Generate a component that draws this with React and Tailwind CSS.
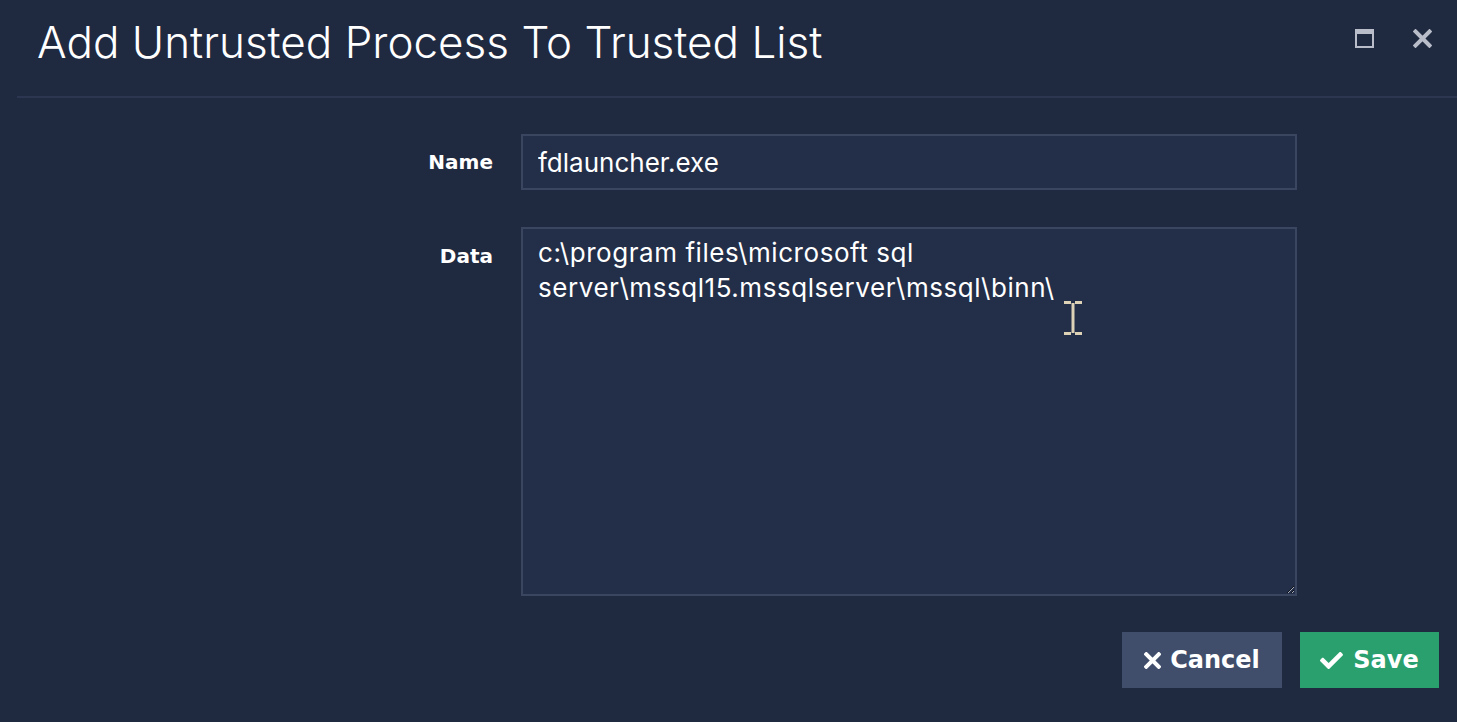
import { FaCheck } from 'react-icons/fa'

const body = { fontFamily: 'Inter, "Open Sans", sans-serif' }
const bold = { fontFamily: '"DejaVu Sans", "Open Sans", sans-serif' }

function MaximizeIcon() {
  return (
    <svg width="19" height="19" viewBox="0 0 19 19" className="text-[#b9bdc9]">
      <rect x="1" y="1" width="17" height="17" fill="none" stroke="currentColor" strokeWidth="2" />
      <rect x="1" y="1" width="17" height="4" fill="currentColor" />
    </svg>
  )
}

function CloseIcon({ size = 19, stroke = 4, className = '' }) {
  return (
    <svg width={size} height={size} viewBox="0 0 19 19" className={className}>
      <path d="M2.5 2.5l14 14M16.5 2.5l-14 14" stroke="currentColor" strokeWidth={stroke} strokeLinecap="square" />
    </svg>
  )
}

function IBeam() {
  return (
    <svg width="20" height="34" viewBox="0 0 20 34" className="text-[#ddd1b6]">
      <path d="M1 1.5h7M12 1.5h7M1 32.5h7M12 32.5h7" stroke="currentColor" strokeWidth="3" />
      <path d="M10 2v30" stroke="currentColor" strokeWidth="3" />
    </svg>
  )
}

export default function App() {
  return (
    <div className="min-h-[722px] bg-[#1f2940] text-white" style={body}>
      {/* header */}
      <div className="flex items-start justify-between h-[96px] pl-[37px] pr-[25px] pt-[20px]">
        <h1 className="text-[44px] font-light text-white leading-none">
          Add Untrusted Process To Trusted List
        </h1>
        <div className="flex items-center gap-[39px] pt-[9px]">
          <MaximizeIcon />
          <CloseIcon className="text-[#b9bdc9]" />
        </div>
      </div>
      <div className="ml-[17px] h-[2px] bg-[#2c3650]" />

      {/* form */}
      <div className="pt-[36px]">
        <div className="flex items-center">
          <label className="w-[493px] text-right text-[20px] leading-[28px] font-bold text-white" style={bold}>
            Name
          </label>
          <input
            defaultValue="fdlauncher.exe"
            className="ml-[28px] w-[776px] h-[56px] px-[15px] bg-[#232e48] border-2 border-[#3a4560] text-[26px] text-white outline-none"
          />
        </div>

        <div className="flex items-start mt-[37px]">
          <label className="w-[493px] text-right text-[20px] leading-[28px] font-bold text-white pt-[15px]" style={bold}>
            Data
          </label>
          <div className="relative ml-[28px]">
            <textarea
              defaultValue={'c:\\program files\\microsoft sql server\\mssql15.mssqlserver\\mssql\\binn\\'}
              className="block w-[776px] h-[369px] px-[15px] pt-[6px] bg-[#232e48] border-2 border-[#3a4560] text-[26px] leading-[35px] tracking-[0.55px] text-white outline-none resize-y"
            />
            <div className="absolute left-[542px] top-[74px] pointer-events-none">
              <IBeam />
            </div>
          </div>
        </div>

        <div className="flex justify-end gap-[18px] mt-[36px] pr-[18px]" style={bold}>
          <button className="flex items-center justify-center gap-[9px] w-[160px] h-[56px] bg-[#404d6b] text-white text-[24px] font-bold">
            <CloseIcon size={17} stroke={4.4} />
            Cancel
          </button>
          <button className="flex items-center justify-center gap-[10px] w-[139px] h-[56px] bg-[#2aa06f] text-white text-[24px] font-bold">
            <FaCheck className="text-[23px]" />
            Save
          </button>
        </div>
      </div>
    </div>
  )
}
